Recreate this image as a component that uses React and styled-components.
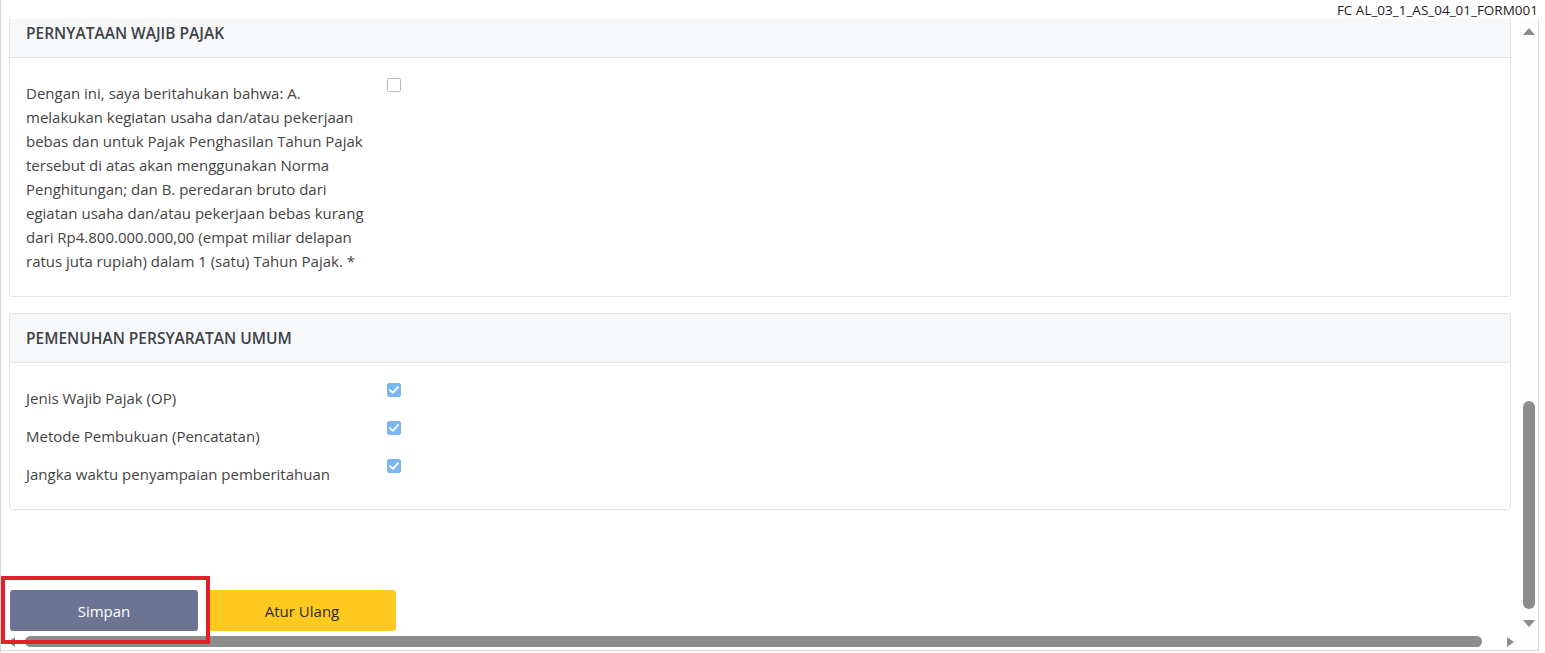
import React from 'react';
import styled, { createGlobalStyle } from 'styled-components';

const GlobalStyle = createGlobalStyle`
  html, body {
    margin: 0;
    padding: 0;
    background: #fff;
  }
  body {
    font-family: 'Open Sans', 'Noto Sans', sans-serif;
    color: #444;
  }
`;

const Frame = styled.div`
  position: relative;
  width: 1545px;
  height: 653px;
  display: flex;
  flex-direction: column;
  box-sizing: border-box;
  border-left: 1px solid #d4d4d4;
  overflow: hidden;
`;

const TitleBar = styled.div`
  height: 19px;
  display: flex;
  justify-content: flex-end;
  align-items: center;
  padding-right: 7px;
  font-size: 13.5px;
  color: #222;
`;

const Viewport = styled.div`
  width: 1538px;
  height: 632px;
  display: grid;
  grid-template-columns: 1fr 18px;
  grid-template-rows: 1fr 17px;
  border-right: 1px solid #dcdcdc;
  border-bottom: 1px solid #dcdcdc;
  box-sizing: border-box;
`;

const Content = styled.div`
  overflow: hidden;
  padding: 0 9px 0 8px;
`;

const Scrolled = styled.div`
  margin-top: -11px;
  display: flex;
  flex-direction: column;
  gap: 16px;
`;

const Card = styled.section`
  border: 1px solid #e2e4e7;
  border-radius: 3px;
  background: #fff;
`;

const CardHeader = styled.div`
  height: 48px;
  display: flex;
  align-items: center;
  padding: 0 16px;
  background: #f7f8fa;
  border-bottom: 1px solid #e2e4e7;
  font-size: 15.5px;
  font-weight: 600;
  color: #3d4248;
`;

const CardBody = styled.div`
  padding: 16px;
`;

const Row = styled.div`
  display: grid;
  grid-template-columns: 345px 1fr;
  column-gap: 16px;
`;

const Label = styled.div`
  padding: 7px 0;
  font-size: 15px;
  line-height: 24px;
  color: #444;
`;

const Check = styled.span`
  margin-top: 4px;
  width: 14px;
  height: 14px;
  box-sizing: border-box;
  border-radius: 2px;
  display: flex;
  align-items: center;
  justify-content: center;
  border: 1px solid ${(p) => (p.checked ? '#7ab7f2' : '#bdbdbd')};
  background: ${(p) => (p.checked ? '#7ab7f2' : '#fff')};
`;

const Actions = styled.div`
  margin-top: 80px;
  padding-left: 1px;
  display: flex;
  gap: 10px;
`;

const Button = styled.button`
  width: 188px;
  height: 41px;
  border: none;
  border-radius: 3px;
  font-family: inherit;
  font-size: 15px;
  background: ${(p) => (p.variant === 'warning' ? '#ffc91f' : '#6c7494')};
  color: ${(p) => (p.variant === 'warning' ? '#2b2b2b' : '#fff')};
`;

const VScroll = styled.div`
  display: flex;
  flex-direction: column;
  align-items: center;
  background: #fdfdfd;
  padding: 9px 0 6px;
`;

const HScroll = styled.div`
  display: flex;
  align-items: center;
  padding: 0 6px 0 7px;
`;

const Arrow = styled.span`
  width: 0;
  height: 0;
  flex: none;
  border: 5px solid transparent;
  ${(p) => p.dir === 'up' && 'border-bottom: 7px solid #8c8c8c; border-top: 0; border-left-width: 6px; border-right-width: 6px;'}
  ${(p) => p.dir === 'down' && 'border-top: 7px solid #8c8c8c; border-bottom: 0; border-left-width: 6px; border-right-width: 6px;'}
  ${(p) => p.dir === 'left' && 'border-right: 7px solid #8c8c8c; border-left: 0;'}
  ${(p) => p.dir === 'right' && 'border-left: 7px solid #8c8c8c; border-right: 0;'}
`;

const VTrack = styled.div`
  flex: 1;
  width: 12px;
  display: flex;
  flex-direction: column;
  padding: 3px 0 6px;
`;

const HTrack = styled.div`
  flex: 1;
  height: 11px;
  display: flex;
  padding: 0 20px 0 4px;
`;

const Thumb = styled.div`
  background: #8c8c8c;
  border-radius: 6px;
  flex: none;
`;

const Corner = styled.div`
  background: #fdfdfd;
`;

const Highlight = styled.div`
  position: absolute;
  left: 0;
  top: 576px;
  width: 209px;
  height: 68px;
  box-sizing: border-box;
  border: 4px solid #e3202a;
  pointer-events: none;
`;

const CheckMark = () => (
  <svg width="10" height="8" viewBox="0 0 10 8">
    <path d="M1 4.2 L3.8 6.8 L9 1.2" fill="none" stroke="#fff" strokeWidth="1.8" strokeLinecap="round" strokeLinejoin="round" />
  </svg>
);

const requirements = [
  'Jenis Wajib Pajak (OP)',
  'Metode Pembukuan (Pencatatan)',
  'Jangka waktu penyampaian pemberitahuan',
];

export default function App() {
  return (
    <>
      <GlobalStyle />
      <Frame>
        <TitleBar>FC AL_03_1_AS_04_01_FORM001</TitleBar>
        <Viewport>
          <Content>
            <Scrolled>
              <Card>
                <CardHeader>PERNYATAAN WAJIB PAJAK</CardHeader>
                <CardBody>
                  <Row>
                    <Label>
                      Dengan ini, saya beritahukan bahwa: A. melakukan kegiatan usaha dan/atau
                      pekerjaan bebas dan untuk Pajak Penghasilan Tahun Pajak tersebut di atas
                      akan menggunakan Norma Penghitungan; dan B. peredaran bruto dari egiatan
                      usaha dan/atau pekerjaan bebas kurang dari Rp4.800.000.000,00 (empat miliar
                      delapan ratus juta rupiah) dalam 1 (satu) Tahun Pajak. *
                    </Label>
                    <Check />
                  </Row>
                </CardBody>
              </Card>

              <Card>
                <CardHeader>PEMENUHAN PERSYARATAN UMUM</CardHeader>
                <CardBody>
                  {requirements.map((r) => (
                    <Row key={r}>
                      <Label>{r}</Label>
                      <Check checked>
                        <CheckMark />
                      </Check>
                    </Row>
                  ))}
                </CardBody>
              </Card>
            </Scrolled>
            <Actions>
              <Button>Simpan</Button>
              <Button variant="warning">Atur Ulang</Button>
            </Actions>
          </Content>

          <VScroll>
            <Arrow dir="up" />
            <VTrack>
              <Thumb style={{ marginTop: 363, height: 208 }} />
            </VTrack>
            <Arrow dir="down" />
          </VScroll>

          <HScroll>
            <Arrow dir="left" />
            <HTrack>
              <Thumb style={{ marginLeft: 6, width: 1457 }} />
            </HTrack>
            <Arrow dir="right" />
          </HScroll>
          <Corner />
        </Viewport>
        <Highlight />
      </Frame>
    </>
  );
}
